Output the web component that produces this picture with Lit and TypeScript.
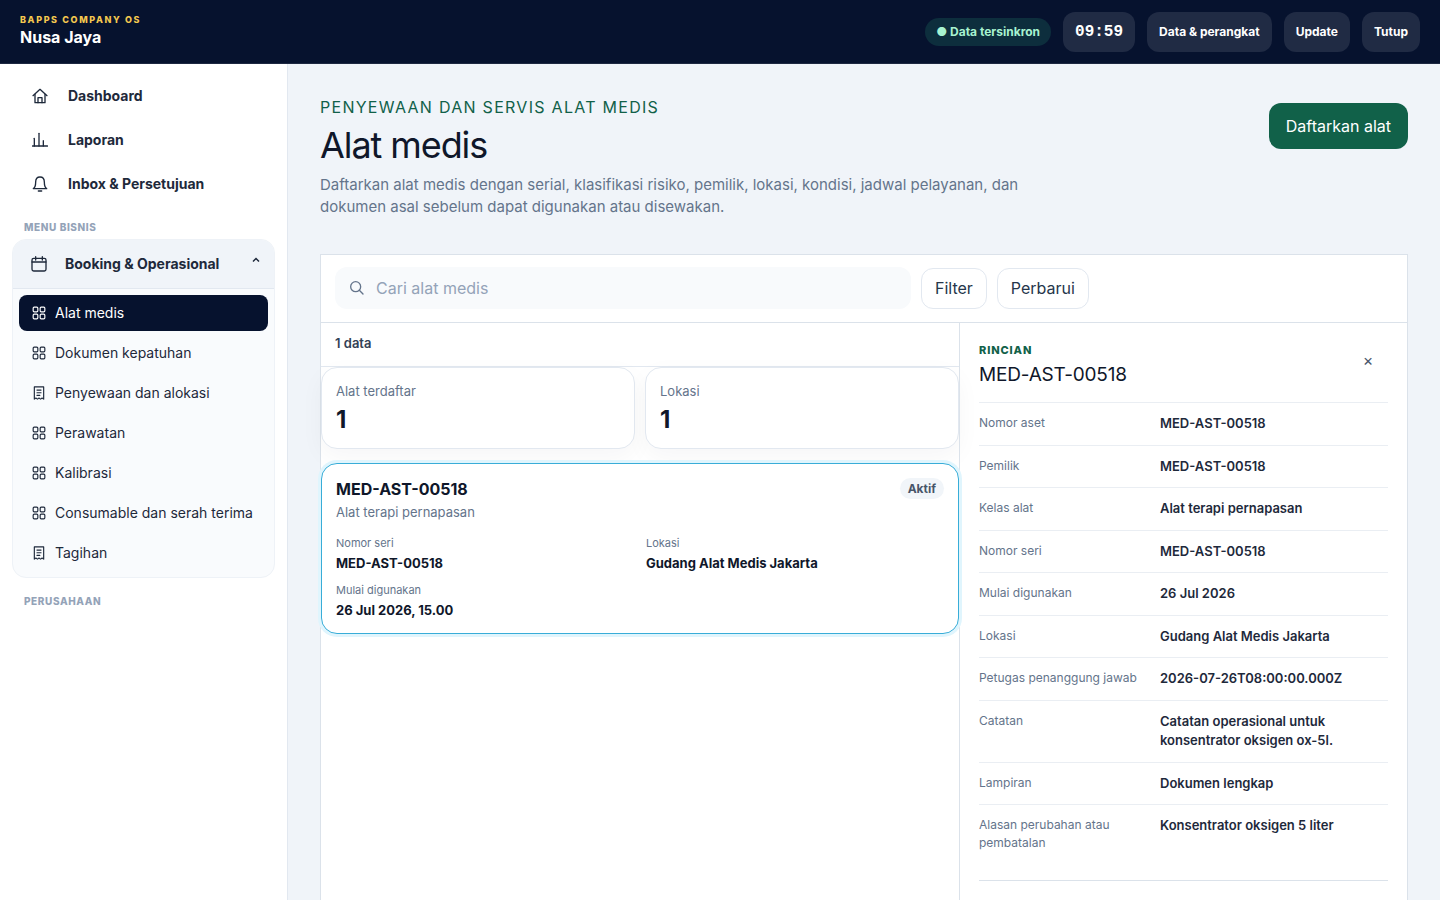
import { LitElement, html, css, svg } from "lit";
import { customElement, state } from "lit/decorators.js";

const icons: Record<string, unknown> = {
  home: svg`<path d="M1.500 11.500 12 2l10.500 9.500"/><path d="M4.500 9.500V22h15V9.500"/><path d="M9 22v-7.500h6V22"/>`,
  chart: svg`<path d="M.8 21h22.400"/><path d="M3.500 21V9.500"/><path d="M10.500 21V2"/><path d="M17 21v-8"/>`,
  bell: svg`<path d="M12 1.500c-4.500 0-6.500 3.500-6.500 7.500 0 6-2 9-3.500 10h20c-1.500-1-3.500-4-3.500-10 0-4-2-7.500-6.500-7.500z"/><path d="M9.500 22.500h5"/>`,
  calendar: svg`<rect x="1.500" y="3.500" width="21" height="19" rx="2.500"/><path d="M1.500 9h21M7 1v5M17 1v5"/>`,
  grid: svg`<rect x="2" y="2" width="8" height="8" rx="1.800"/><rect x="14" y="2" width="8" height="8" rx="1.800"/><rect x="2" y="14" width="8" height="8" rx="1.800"/><rect x="14" y="14" width="8" height="8" rx="1.800"/>`,
  receipt: svg`<path d="M4 1.500h16v21l-2.700-1.800-2.600 1.800-2.700-1.800-2.700 1.800-2.600-1.800-2.700 1.800z"/><path d="M8.500 7h7M8.500 11.500h7M8.500 16h5"/>`,
  search: svg`<circle cx="10" cy="10" r="7.500"/><path d="m15.500 15.500 5.500 5.500"/>`,
  up: svg`<path d="m6 15 6-6 6 6"/>`,
};

const icon = (name: string, cls = "icon") =>
  html`<svg class=${cls} viewBox="0 0 24 24" aria-hidden="true">${icons[name]}</svg>`;

const iconStyles = css`
  .icon, .icon-sm {
    width: 16px;
    height: 16px;
    flex: none;
    fill: none;
    stroke: currentColor;
    stroke-width: 2;
    stroke-linecap: round;
    stroke-linejoin: round;
  }
  .icon-sm { width: 14px; height: 14px; }
`;

const base = css`
  *, *::before, *::after { box-sizing: border-box; }
  h1, h2, h3, p, dl, dd { margin: 0; font-weight: 400; }
  button, input { font: inherit; color: inherit; margin: 0; }
  button { cursor: pointer; }
`;

@customElement("top-bar")
class TopBar extends LitElement {
  static styles = [
    base,
    css`
      :host { display: block; }
      .bar {
        display: flex;
        align-items: center;
        justify-content: space-between;
        height: 64px;
        padding: 0 20px;
        background: #06122e;
        border-bottom: 1px solid #1d2841;
        color: #fff;
      }
      .brand { padding-bottom: 4px; }
      .eyebrow {
        font-size: 9px;
        line-height: 14px;
        font-weight: 800;
        letter-spacing: 0.18em;
        color: #f4c84f;
      }
      .name { font-size: 16px; line-height: 20px; font-weight: 700; }
      .tools { display: flex; align-items: center; gap: 12px; font-size: 12px; font-weight: 700; }
      .sync {
        padding: 0 11px;
        border-radius: 14px;
        line-height: 28px;
        background: #0d2e3d;
        color: #a7f3d0;
      }
      .clock, .tool {
        display: flex;
        align-items: center;
        height: 40px;
        padding: 0 12px;
        border: 0;
        border-radius: 12px;
        background: #202b44;
        color: #fff;
      }
      .clock { font: 700 16px/20px "Liberation Mono", monospace; }
    `,
  ];
  render() {
    return html`
      <header class="bar">
        <div class="brand">
          <div class="eyebrow">BAPPS COMPANY OS</div>
          <div class="name">Nusa Jaya</div>
        </div>
        <div class="tools">
          <span class="sync">● Data tersinkron</span>
          <time class="clock">09:59</time>
          <button class="tool">Data &amp; perangkat</button>
          <button class="tool">Update</button>
          <button class="tool">Tutup</button>
        </div>
      </header>
    `;
  }
}

@customElement("side-nav")
class SideNav extends LitElement {
  private top = [
    ["home", "Dashboard"],
    ["chart", "Laporan"],
    ["bell", "Inbox & Persetujuan"],
  ];
  private items = [
    ["grid", "Alat medis"],
    ["grid", "Dokumen kepatuhan"],
    ["receipt", "Penyewaan dan alokasi"],
    ["grid", "Perawatan"],
    ["grid", "Kalibrasi"],
    ["grid", "Consumable dan serah terima"],
    ["receipt", "Tagihan"],
  ];
  @state() private active = 0;
  @state() private open = true;

  static styles = [
    base,
    iconStyles,
    css`
      :host { display: block; }
      .nav {
        height: 100%;
        padding: 12px;
        background: #fff;
        border-right: 1px solid #e2e8f0;
        color: #1e293b;
      }
      .list { display: grid; gap: 4px; }
      .link {
        display: flex;
        align-items: center;
        gap: 20px;
        height: 40px;
        padding: 0 20px;
        border-radius: 10px;
        font-size: 14px;
        font-weight: 700;
        color: inherit;
        text-decoration: none;
      }
      .text { line-height: 18px; }
      .label {
        padding: 0 12px;
        margin-top: 16px;
        font-size: 10px;
        line-height: 15px;
        font-weight: 800;
        letter-spacing: 0.06em;
        color: #94a3b8;
      }
      .group {
        margin-top: 4px;
        border: 1px solid #eef2f7;
        border-radius: 14px;
        background: #f9fbfd;
        overflow: hidden;
      }
      .head {
        display: flex;
        align-items: center;
        gap: 18px;
        width: 100%;
        height: 49px;
        padding: 0 12px 0 18px;
        border: 0;
        border-bottom: 1px solid #e2e8f0;
        background: #f0f4f9;
        font-size: 14px;
        font-weight: 700;
        text-align: left;
      }
      .title { flex: 1; }
      .chevron {
        width: 12px;
        height: 12px;
        margin-bottom: 8px;
        fill: none;
        stroke: currentColor;
        stroke-width: 3;
      }
      .sub { display: grid; gap: 4px; padding: 6px; }
      .item {
        display: flex;
        align-items: center;
        gap: 9px;
        height: 36px;
        padding: 0 13px;
        border-radius: 8px;
        font-size: 14px;
        color: inherit;
        text-decoration: none;
        white-space: nowrap;
      }
      .on { background: #06122e; color: #fff; }
    `,
  ];
  render() {
    return html`
      <nav class="nav">
        <div class="list">
          ${this.top.map(([i, t]) => html`<a class="link" href="#">${icon(i)}<span class="text">${t}</span></a>`)}
        </div>
        <div class="label">MENU BISNIS</div>
        <div class="group">
          <button class="head" aria-expanded=${this.open} @click=${() => (this.open = !this.open)}>
            ${icon("calendar")}<span class="text title">Booking &amp; Operasional</span>${icon("up", "chevron")}
          </button>
          ${this.open
            ? html`<div class="sub">
                ${this.items.map(
                  ([i, t], n) => html`<a
                    class="item ${n === this.active ? "on" : ""}"
                    href="#"
                    @click=${() => (this.active = n)}
                    >${icon(i, "icon-sm")}<span class="text">${t}</span></a
                  >`
                )}
              </div>`
            : ""}
        </div>
        <div class="label">PERUSAHAAN</div>
      </nav>
    `;
  }
}

@customElement("asset-panel")
class AssetPanel extends LitElement {
  private stats = [
    ["Alat terdaftar", "1"],
    ["Lokasi", "1"],
  ];
  private facts = [
    ["Nomor seri", "MED-AST-00518"],
    ["Lokasi", "Gudang Alat Medis Jakarta"],
    ["Mulai digunakan", "26 Jul 2026, 15.00"],
  ];
  private details = [
    ["Nomor aset", "MED-AST-00518"],
    ["Pemilik", "MED-AST-00518"],
    ["Kelas alat", "Alat terapi pernapasan"],
    ["Nomor seri", "MED-AST-00518"],
    ["Mulai digunakan", "26 Jul 2026"],
    ["Lokasi", "Gudang Alat Medis Jakarta"],
    ["Petugas penanggung jawab", "2026-07-26T08:00:00.000Z"],
    ["Catatan", "Catatan operasional untuk konsentrator oksigen ox-5l."],
    ["Lampiran", "Dokumen lengkap"],
    ["Alasan perubahan atau pembatalan", "Konsentrator oksigen 5 liter"],
  ];

  static styles = [
    base,
    iconStyles,
    css`
      :host { display: flex; flex-direction: column; }
      .panel {
        flex: 1;
        display: flex;
        flex-direction: column;
        background: #fff;
        border: 1px solid #dbe2ea;
        border-bottom: 0;
      }
      .toolbar {
        display: flex;
        align-items: center;
        gap: 10px;
        padding: 12px 14px 13px;
        border-bottom: 1px solid #dbe2ea;
      }
      .search {
        display: flex;
        align-items: center;
        gap: 11px;
        flex: 0 1 576px;
        height: 42px;
        padding: 0 14px;
        border-radius: 12px;
        background: #f8fafc;
        color: #64748b;
      }
      .input {
        flex: 1;
        min-width: 0;
        padding: 0;
        border: 0;
        outline: 0;
        background: none;
        font-size: 16px;
      }
      .input::placeholder { color: #94a3b8; opacity: 1; }
      .btn {
        height: 41px;
        padding: 0 13px;
        border: 1px solid #e2e8f0;
        border-radius: 12px;
        background: #fff;
        font-size: 16px;
        color: #26364b;
      }
      .split { flex: 1; display: grid; grid-template-columns: minmax(0, 1fr) 448px; }
      .count {
        padding: 0 14px 2px;
        font-size: 13px;
        line-height: 41px;
        font-weight: 600;
        color: #334155;
        border-bottom: 1px solid #e2e8f0;
      }
      .stats { display: grid; grid-template-columns: 1fr 1fr; gap: 10px; margin-bottom: 14px; }
      .stat {
        padding: 14px;
        border: 1px solid #e2e8f0;
        border-radius: 16px;
        background: #fff;
        box-shadow: 0 8px 24px rgba(15, 23, 42, 0.04);
      }
      .stat-label { font-size: 13px; line-height: 18px; color: #64748b; }
      .stat-value { margin-top: 6px; font-size: 24px; line-height: 28px; font-weight: 700; color: #0f172a; }
      .record {
        position: relative;
        padding: 14px 14px 13px;
        border: 1px solid #38add8;
        border-radius: 16px;
        background: #fff;
        box-shadow: 0 0 0 3px #e0f5fd;
      }
      .record-head { display: flex; justify-content: space-between; align-items: flex-start; }
      .record-title { font-size: 16px; line-height: 22px; font-weight: 700; color: #0f172a; }
      .record-sub { margin-top: 1px; font-size: 13px; line-height: 22px; color: #64748b; }
      .badge {
        padding: 0 8px;
        border-radius: 11px;
        background: #f1f5f9;
        font-size: 12px;
        line-height: 21px;
        font-weight: 700;
        color: #475569;
      }
      .facts { display: grid; grid-template-columns: 1fr 1fr; gap: 8px 12px; margin-top: 11px; }
      .fact-label { font-size: 11px; line-height: 18px; color: #64748b; }
      .fact-value { margin-top: 1px; font-size: 13px; line-height: 20px; font-weight: 700; color: #0f172a; }
      .details { padding: 18px 19px; border-left: 1px solid #dbe2ea; }
      .details-head {
        display: flex;
        justify-content: space-between;
        align-items: flex-start;
        padding-bottom: 13px;
      }
      .eyebrow {
        font-size: 11px;
        line-height: 18px;
        font-weight: 800;
        letter-spacing: 0.08em;
        color: #116149;
      }
      .details-title {
        margin-top: 2px;
        font-size: 19px;
        line-height: 28px;
        letter-spacing: -0.01em;
        color: #0f172a;
      }
      .close {
        width: 40px;
        height: 38px;
        padding: 0;
        border: 0;
        background: none;
        font-size: 16px;
        color: #475569;
      }
      .rows { padding-bottom: 17px; border-bottom: 1px solid #dbe2ea; }
      .row {
        display: grid;
        grid-template-columns: 3fr 4fr;
        gap: 10px;
        padding: 11px 0;
        border-top: 1px solid #eaeef3;
        line-height: 1.5;
      }
      .term { font-size: 12px; color: #64748b; }
      .value { font-size: 13px; font-weight: 600; color: #1e293b; }
    `,
  ];
  render() {
    return html`
      <section class="panel">
        <div class="toolbar">
          <label class="search">
            ${icon("search")}
            <input class="input" type="search" aria-label="Cari alat medis" placeholder="Cari alat medis" />
          </label>
          <button class="btn">Filter</button>
          <button class="btn">Perbarui</button>
        </div>
        <div class="split">
          <div>
            <div class="count">1 data</div>
            <div class="stats">
              ${this.stats.map(
                ([l, v]) => html`<div class="stat">
                  <div class="stat-label">${l}</div>
                  <div class="stat-value">${v}</div>
                </div>`
              )}
            </div>
            <article class="record">
              <div class="record-head">
                <div>
                  <h3 class="record-title">MED-AST-00518</h3>
                  <p class="record-sub">Alat terapi pernapasan</p>
                </div>
                <span class="badge">Aktif</span>
              </div>
              <dl class="facts">
                ${this.facts.map(
                  ([l, v]) => html`<div>
                    <dt class="fact-label">${l}</dt>
                    <dd class="fact-value">${v}</dd>
                  </div>`
                )}
              </dl>
            </article>
          </div>
          <aside class="details">
            <div class="details-head">
              <div>
                <div class="eyebrow">RINCIAN</div>
                <h2 class="details-title">MED-AST-00518</h2>
              </div>
              <button class="close" aria-label="Tutup rincian">×</button>
            </div>
            <dl class="rows">
              ${this.details.map(
                ([l, v]) => html`<div class="row">
                  <dt class="term">${l}</dt>
                  <dd class="value">${v}</dd>
                </div>`
              )}
            </dl>
          </aside>
        </div>
      </section>
    `;
  }
}

@customElement("app-root")
class AppRoot extends LitElement {
  static styles = [
    base,
    css`
      :host {
        display: flex;
        flex-direction: column;
        height: 100vh;
        overflow: hidden;
        background: #f0f4f9;
        font-family: Inter, "Liberation Sans", sans-serif;
        color: #0f172a;
      }
      .body { flex: 1; min-height: 0; display: grid; grid-template-columns: 288px minmax(0, 1fr); }
      .main {
        display: flex;
        flex-direction: column;
        gap: 36px;
        padding: 32px 32px 0;
        overflow: hidden;
      }
      .heading { display: flex; justify-content: space-between; align-items: flex-start; gap: 32px; }
      .eyebrow { font-size: 16px; line-height: 22px; letter-spacing: 0.08em; color: #116149; }
      .title { margin-top: 4px; font-size: 36px; line-height: 46px; letter-spacing: -0.03em; }
      .lead { margin-top: 6px; max-width: 720px; font-size: 15px; line-height: 22px; color: #64748b; }
      .actions { padding-top: 7px; }
      .primary {
        height: 46px;
        padding: 0 17px;
        border: 0;
        border-radius: 12px;
        background: #116149;
        color: #fff;
        font-size: 16px;
      }
      .content { flex: 1 0 auto; }
    `,
  ];
  render() {
    return html`
      <top-bar></top-bar>
      <div class="body">
        <side-nav></side-nav>
        <main class="main">
          <div class="heading">
            <div>
              <div class="eyebrow">PENYEWAAN DAN SERVIS ALAT MEDIS</div>
              <h1 class="title">Alat medis</h1>
              <p class="lead">
                Daftarkan alat medis dengan serial, klasifikasi risiko, pemilik, lokasi, kondisi, jadwal
                pelayanan, dan dokumen asal sebelum dapat digunakan atau disewakan.
              </p>
            </div>
            <div class="actions"><button class="primary">Daftarkan alat</button></div>
          </div>
          <asset-panel class="content"></asset-panel>
        </main>
      </div>
    `;
  }
}
